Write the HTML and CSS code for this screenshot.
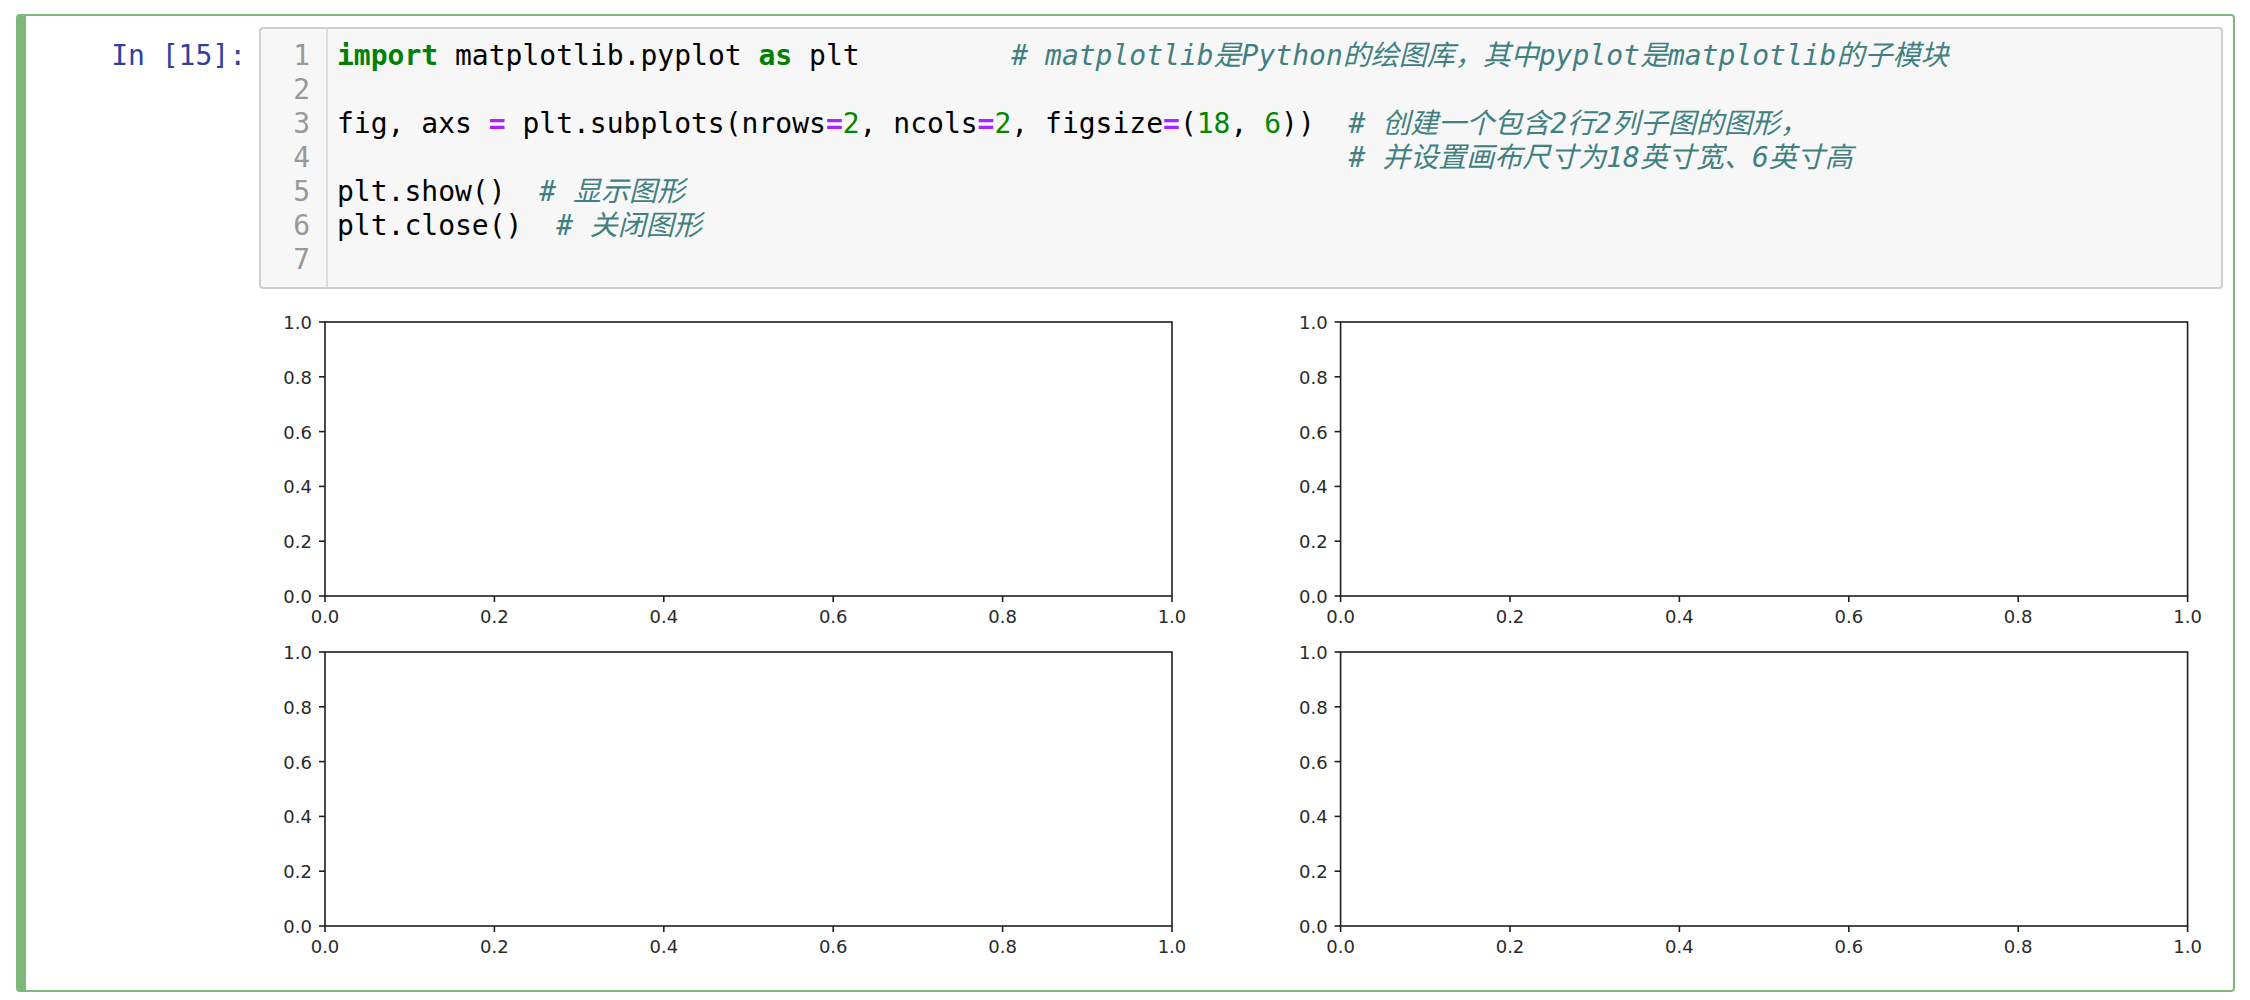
FILE: index.html
```html
<!DOCTYPE html>
<html lang="zh-CN">
<head>
<meta charset="utf-8">
<title>Notebook cell</title>
<link rel="stylesheet" href="styles.css">
</head>
<body>
<div class="cell">
  <div class="input">
    <div class="prompt">In&nbsp;[15]:</div>
    <div class="editor">
      <div class="gutter"><div>1</div><div>2</div><div>3</div><div>4</div><div>5</div><div>6</div><div>7</div></div>
      <div class="code"><div class="line"><span class="kw">import</span> matplotlib.pyplot <span class="kw">as</span> plt         <span class="cm"># matplotlib是Python的绘图库，其中pyplot是matplotlib的子模块</span></div><div class="line"> </div><div class="line">fig, axs <span class="op">=</span> plt.subplots(nrows<span class="op">=</span><span class="nu">2</span>, ncols<span class="op">=</span><span class="nu">2</span>, figsize<span class="op">=</span>(<span class="nu">18</span>, <span class="nu">6</span>))  <span class="cm"># 创建一个包含2行2列子图的图形，</span></div><div class="line">                                                            <span class="cm"># 并设置画布尺寸为18英寸宽、6英寸高</span></div><div class="line">plt.show()  <span class="cm"># 显示图形</span></div><div class="line">plt.close()  <span class="cm"># 关闭图形</span></div><div class="line"> </div></div>
    </div>
  </div>
  <div class="output">
    <div class="out-prompt"></div>
    <svg class="figure" width="1964" height="691" viewBox="0 0 1964 691" xmlns="http://www.w3.org/2000/svg">
      <defs>
        <g id="axes">
          <rect x="0" y="0" width="847" height="274" fill="#fff" stroke="#1f1f1f" stroke-width="1.6"/>
          <g stroke="#1f1f1f" stroke-width="1.6">
            <line x1="0" y1="274" x2="0" y2="280"/>
            <line x1="169.4" y1="274" x2="169.4" y2="280"/>
            <line x1="338.8" y1="274" x2="338.8" y2="280"/>
            <line x1="508.2" y1="274" x2="508.2" y2="280"/>
            <line x1="677.6" y1="274" x2="677.6" y2="280"/>
            <line x1="847" y1="274" x2="847" y2="280"/>
            <line x1="-6" y1="274" x2="0" y2="274"/>
            <line x1="-6" y1="219.2" x2="0" y2="219.2"/>
            <line x1="-6" y1="164.4" x2="0" y2="164.4"/>
            <line x1="-6" y1="109.6" x2="0" y2="109.6"/>
            <line x1="-6" y1="54.8" x2="0" y2="54.8"/>
            <line x1="-6" y1="0" x2="0" y2="0"/>
          </g>
          <g class="ticklabel" text-anchor="middle">
            <text x="0" y="301">0.0</text>
            <text x="169.4" y="301">0.2</text>
            <text x="338.8" y="301">0.4</text>
            <text x="508.2" y="301">0.6</text>
            <text x="677.6" y="301">0.8</text>
            <text x="847" y="301">1.0</text>
          </g>
          <g class="ticklabel" text-anchor="end">
            <text x="-13" y="281">0.0</text>
            <text x="-13" y="226.2">0.2</text>
            <text x="-13" y="171.4">0.4</text>
            <text x="-13" y="116.6">0.6</text>
            <text x="-13" y="61.8">0.8</text>
            <text x="-13" y="7">1.0</text>
          </g>
        </g>
      </defs>
      <use href="#axes" x="66" y="33"/>
      <use href="#axes" x="1081.6" y="33"/>
      <use href="#axes" x="66" y="363"/>
      <use href="#axes" x="1081.6" y="363"/>
    </svg>
  </div>
</div>
</body>
</html>
```

FILE: styles.css
```css
html, body {
  margin: 0;
  padding: 0;
  background: #ffffff;
}

body {
  font-family: "DejaVu Sans Mono", "Noto Sans CJK SC", monospace;
}

.cell {
  margin: 14px 15px 0 16px;
  border: 2px solid #7db87a;
  border-left-width: 10px;
  border-radius: 4px;
  padding: 11px 10px 10px 0;
}

.input {
  display: flex;
  align-items: flex-start;
}

.prompt {
  flex: none;
  width: 233px;
  box-sizing: border-box;
  padding: 12px 13px 0 0;
  text-align: right;
  color: #303f9f;
  font: 28px/34px "DejaVu Sans Mono", monospace;
}

.editor {
  flex: 1;
  display: flex;
  background: #f7f7f7;
  border: 2px solid #cfcfcf;
  border-radius: 4px;
  font: 28px/34px "DejaVu Sans Mono", "Noto Sans CJK SC", monospace;
  color: #000000;
}

.gutter {
  flex: none;
  width: 49px;
  padding: 10px 16px 10px 0;
  border-right: 2px solid #dddddd;
  text-align: right;
  color: #999999;
}

.code {
  flex: 1;
  padding: 10px 0 10px 9px;
  white-space: pre;
}

.line {
  height: 34px;
}

.kw {
  color: #008000;
  font-weight: bold;
}

.op {
  color: #aa22ff;
  font-weight: bold;
}

.nu {
  color: #008800;
}

.cm {
  color: #408080;
  font-style: italic;
}

.output {
  display: flex;
}

.out-prompt {
  flex: none;
  width: 233px;
}

.figure {
  display: block;
  flex: none;
}

.ticklabel {
  font-family: "DejaVu Sans", sans-serif;
  font-size: 18px;
  fill: #2a2a2a;
}
```
